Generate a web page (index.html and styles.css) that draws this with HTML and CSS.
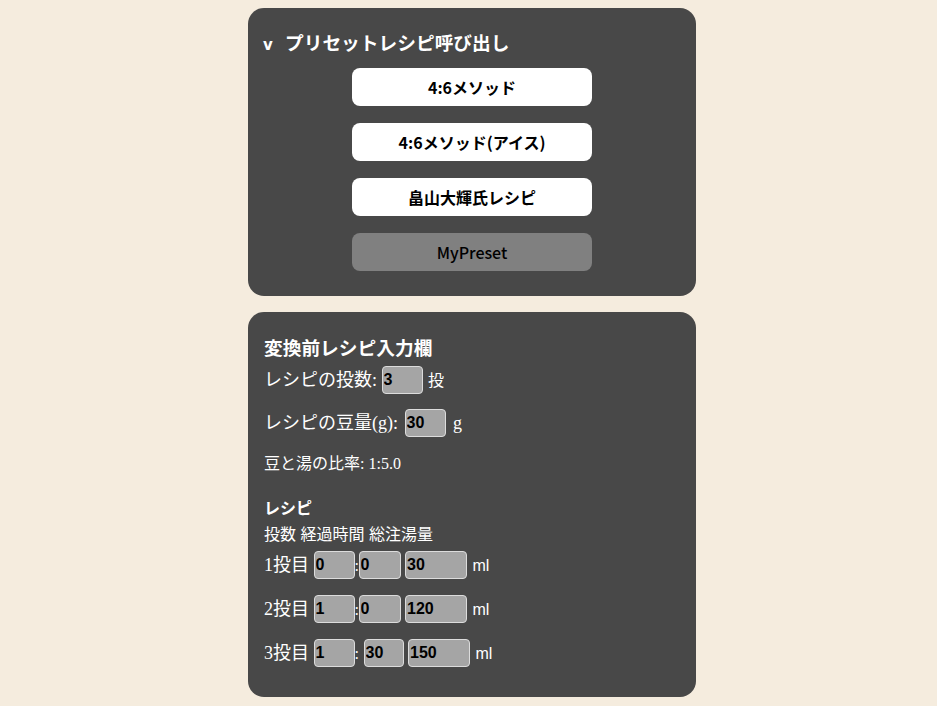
FILE: index.html
```html
<!DOCTYPE html>
<html lang="ja">
<head>
<meta charset="utf-8">
<title>レシピ変換</title>
<link rel="stylesheet" href="styles.css">
</head>
<body>
<div class="page">
  <section class="card presets">
    <h3 class="summary"><span class="chev">v</span>プリセットレシピ呼び出し</h3>
    <div class="btns">
      <button class="preset">4:6メソッド</button>
      <button class="preset">4:6メソッド(アイス)</button>
      <button class="preset">畠山大輝氏レシピ</button>
      <button class="preset mine">MyPreset</button>
    </div>
  </section>

  <section class="card form">
    <h3 class="title">変換前レシピ入力欄</h3>
    <div class="row first">レシピの投数: <input class="in w41" value="3"> <span class="unit">投</span></div>
    <div class="row second">レシピの豆量(g): <input class="in w41" value="30"> <span class="unit serif">g</span></div>
    <div class="ratio">豆と湯の比率: 1:5.0</div>
    <h4 class="sub">レシピ</h4>
    <div class="cols"><span>投数</span> <span>経過時間</span> <span>総注湯量</span></div>
    <div class="row pour p1">1投目 <input class="in w41" value="0"><span class="colon">:</span><input class="in w42" value="0"> <input class="in w62" value="30"> <span class="ml">ml</span></div>
    <div class="row pour">2投目 <input class="in w41" value="1"><span class="colon">:</span><input class="in w42" value="0"> <input class="in w62" value="120"> <span class="ml">ml</span></div>
    <div class="row pour">3投目 <input class="in w41" value="1"><span class="colon wide">:</span><input class="in w40" value="30"> <input class="in w62" value="150"> <span class="ml">ml</span></div>
  </section>
</div>
</body>
</html>
```

FILE: styles.css
```css
html, body {
  margin: 0;
  padding: 0;
  background: #f5ecde;
}

.page {
  padding: 8px 0 0 7px;
  display: flex;
  flex-direction: column;
  align-items: center;
}

.card {
  box-sizing: border-box;
  width: 448px;
  background: #484848;
  border-radius: 16px;
  color: #ffffff;
  padding: 16px 16px 0 16px;
}

.presets {
  padding-bottom: 25px;
}

.form {
  margin-top: 16px;
  padding-bottom: 30px;
  font-family: "Liberation Serif", "Noto Sans CJK JP", serif;
  font-size: 18px;
}

.summary {
  margin: 0 0 8px -1px;
  font-family: "Noto Sans CJK JP", sans-serif;
  font-size: 18.72px;
  font-weight: 700;
  line-height: 36px;
  height: 36px;
}

.chev {
  display: inline-block;
  width: 22px;
  font-family: "DejaVu Sans", sans-serif;
  font-size: 15px;
  font-weight: 700;
}

.btns {
  display: flex;
  flex-direction: column;
  align-items: center;
  gap: 17px;
}

.preset {
  width: 240px;
  height: 38px;
  border: none;
  border-radius: 8px;
  background: #ffffff;
  color: #000000;
  font-family: "Noto Sans CJK JP", sans-serif;
  font-size: 16px;
  font-weight: 700;
  padding: 0;
  line-height: 38px;
}

.preset.mine {
  background: #808080;
  font-weight: 500;
}

.title {
  margin: 0;
  font-family: "Noto Sans CJK JP", sans-serif;
  font-size: 18.72px;
  font-weight: 700;
  line-height: 38px;
  height: 38px;
}

.row {
  height: 28px;
  line-height: 28px;
  white-space: nowrap;
}

.row.second {
  margin-top: 15px;
  word-spacing: 2px;
}

.in {
  box-sizing: border-box;
  height: 28px;
  vertical-align: top;
  margin: 0;
  padding: 0 0 0 1px;
  background: #a5a5a5;
  border: 1px solid #dcdcdc;
  border-radius: 4px;
  color: #000000;
  font-family: "Liberation Sans", Arial, sans-serif;
  font-size: 16px;
  font-weight: 700;
  outline: none;
}

.w40 { width: 40px; }
.w41 { width: 41px; }
.w42 { width: 42px; }
.w62 { width: 62px; }

.unit {
  font-family: "Liberation Sans", "Noto Sans CJK JP", sans-serif;
  font-size: 16px;
  margin-left: 1px;
}

.unit.serif {
  font-family: "Liberation Serif", serif;
  font-size: 18px;
}

.colon {
  display: inline-block;
  width: 4px;
  font-size: 16px;
}

.colon.wide {
  width: 9px;
}

.ml {
  font-family: "Liberation Sans", sans-serif;
  font-size: 16px;
  margin-left: 1px;
}

.ratio {
  margin-top: 17px;
  font-size: 16px;
  line-height: 20px;
  height: 20px;
}

.sub {
  margin: 23px 0 0 0;
  font-family: "Noto Sans CJK JP", sans-serif;
  font-size: 16px;
  font-weight: 700;
  line-height: 20px;
  height: 20px;
}

.cols {
  margin-top: 8px;
  font-size: 16px;
  line-height: 20px;
  height: 20px;
  word-spacing: 0.5px;
}

.pour {
  margin-top: 16px;
}

.pour.p1 {
  margin-top: 6px;
}
```
